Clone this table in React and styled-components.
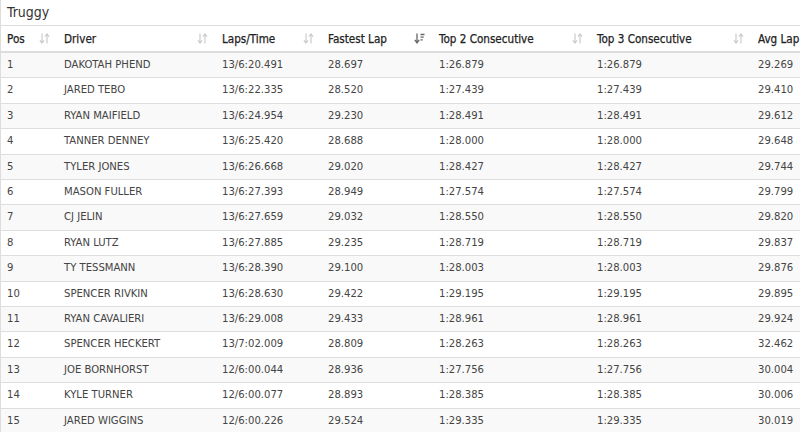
import React from "react";
import styled, { createGlobalStyle } from "styled-components";

const GlobalStyle = createGlobalStyle`
  html, body {
    margin: 0;
    padding: 0;
    background: #fff;
  }
  body, table {
    font-family: "Liberation Sans Narrow", "DejaVu Sans Condensed", "Liberation Sans", sans-serif;
    color: #333;
  }
`;

const columns = [
  { key: "pos", label: "Pos", width: 57 },
  { key: "driver", label: "Driver", width: 158 },
  { key: "laps", label: "Laps/Time", width: 106 },
  { key: "fastest", label: "Fastest Lap", width: 111, active: true },
  { key: "top2", label: "Top 2 Consecutive", width: 158 },
  { key: "top3", label: "Top 3 Consecutive", width: 161 },
  { key: "avg", label: "Avg Lap", width: 48, noIcon: true },
];

const rows = [
  [1, "DAKOTAH PHEND", "13/6:20.491", "28.697", "1:26.879", "1:26.879", "29.269"],
  [2, "JARED TEBO", "13/6:22.335", "28.520", "1:27.439", "1:27.439", "29.410"],
  [3, "RYAN MAIFIELD", "13/6:24.954", "29.230", "1:28.491", "1:28.491", "29.612"],
  [4, "TANNER DENNEY", "13/6:25.420", "28.688", "1:28.000", "1:28.000", "29.648"],
  [5, "TYLER JONES", "13/6:26.668", "29.020", "1:28.427", "1:28.427", "29.744"],
  [6, "MASON FULLER", "13/6:27.393", "28.949", "1:27.574", "1:27.574", "29.799"],
  [7, "CJ JELIN", "13/6:27.659", "29.032", "1:28.550", "1:28.550", "29.820"],
  [8, "RYAN LUTZ", "13/6:27.885", "29.235", "1:28.719", "1:28.719", "29.837"],
  [9, "TY TESSMANN", "13/6:28.390", "29.100", "1:28.003", "1:28.003", "29.876"],
  [10, "SPENCER RIVKIN", "13/6:28.630", "29.422", "1:29.195", "1:29.195", "29.895"],
  [11, "RYAN CAVALIERI", "13/6:29.008", "29.433", "1:28.961", "1:28.961", "29.924"],
  [12, "SPENCER HECKERT", "13/7:02.009", "28.809", "1:28.263", "1:28.263", "32.462"],
  [13, "JOE BORNHORST", "12/6:00.044", "28.936", "1:27.756", "1:27.756", "30.004"],
  [14, "KYLE TURNER", "12/6:00.077", "28.893", "1:28.385", "1:28.385", "30.006"],
  [15, "JARED WIGGINS", "12/6:00.226", "29.524", "1:29.335", "1:29.335", "30.019"],
];

const SortIcon = ({ active }) =>
  active ? (
    <svg width="11" height="11" viewBox="0 0 11 11">
      <path d="M3 0.5v8.5M0.8 6.8L3 9.8L5.2 6.8" stroke="#666" strokeWidth="1.3" fill="none" />
      <path d="M6.5 1.5h4M6.5 4.2h3.2M6.5 6.9h2.2" stroke="#666" strokeWidth="1.3" />
    </svg>
  ) : (
    <svg width="11" height="11" viewBox="0 0 11 11">
      <path d="M3 0.5v9M0.9 7.3L3 10L5.1 7.3" stroke="#ccc" strokeWidth="1.2" fill="none" />
      <path d="M8 10.5v-9M5.9 3.7L8 1L10.1 3.7" stroke="#ccc" strokeWidth="1.2" fill="none" />
    </svg>
  );

export default function App() {
  return (
    <>
      <GlobalStyle />
      <Panel>
        <Title>Truggy</Title>
        <Table>
          <colgroup>
            {columns.map((c) => (
              <col key={c.key} style={{ width: c.width }} />
            ))}
          </colgroup>
          <thead>
            <tr>
              {columns.map((c) => (
                <HeadCell key={c.key} $last={c.noIcon}>
                  <HeadInner>
                    <span>{c.label}</span>
                    {!c.noIcon && <SortIcon active={c.active} />}
                  </HeadInner>
                </HeadCell>
              ))}
            </tr>
          </thead>
          <tbody>
            {rows.map((r, i) => (
              <Row key={r[0]} $striped={i % 2 === 0}>
                {r.map((v, j) => (
                  <Cell key={j}>{v}</Cell>
                ))}
              </Row>
            ))}
          </tbody>
        </Table>
      </Panel>
    </>
  );
}

const Panel = styled.div`
  width: 800px;
  border-left: 1px solid #ddd;
  box-sizing: border-box;
  background: #fff;
`;

const Title = styled.div`
  height: 25px;
  line-height: 24px;
  padding-left: 6px;
  font-size: 14px;
  color: #333;
`;

const Table = styled.table`
  width: 799px;
  border-collapse: collapse;
  table-layout: fixed;
`;

const HeadCell = styled.th`
  border-top: 1px solid #ddd;
  border-bottom: 2px solid #ddd;
  padding: 0 ${(p) => (p.$last ? "0" : "8px")} 0 6px;
  height: 25px;
  text-align: left;
  font-weight: normal;
  font-size: 11.6px;
  color: #222;
  white-space: nowrap;
  -webkit-text-stroke: 0.25px #222;
`;

const HeadInner = styled.div`
  display: flex;
  align-items: center;
  justify-content: space-between;
  svg {
    flex-shrink: 0;
  }
`;

const Row = styled.tr`
  background: ${(p) => (p.$striped ? "#f9f9f9" : "#fff")};
`;

const Cell = styled.td`
  border-top: 1px solid #ddd;
  padding: 4px 6px;
  height: 16.4px;
  line-height: 16.4px;
  font-size: 11.2px;
  color: #444;
  white-space: nowrap;
  overflow: hidden;
`;
